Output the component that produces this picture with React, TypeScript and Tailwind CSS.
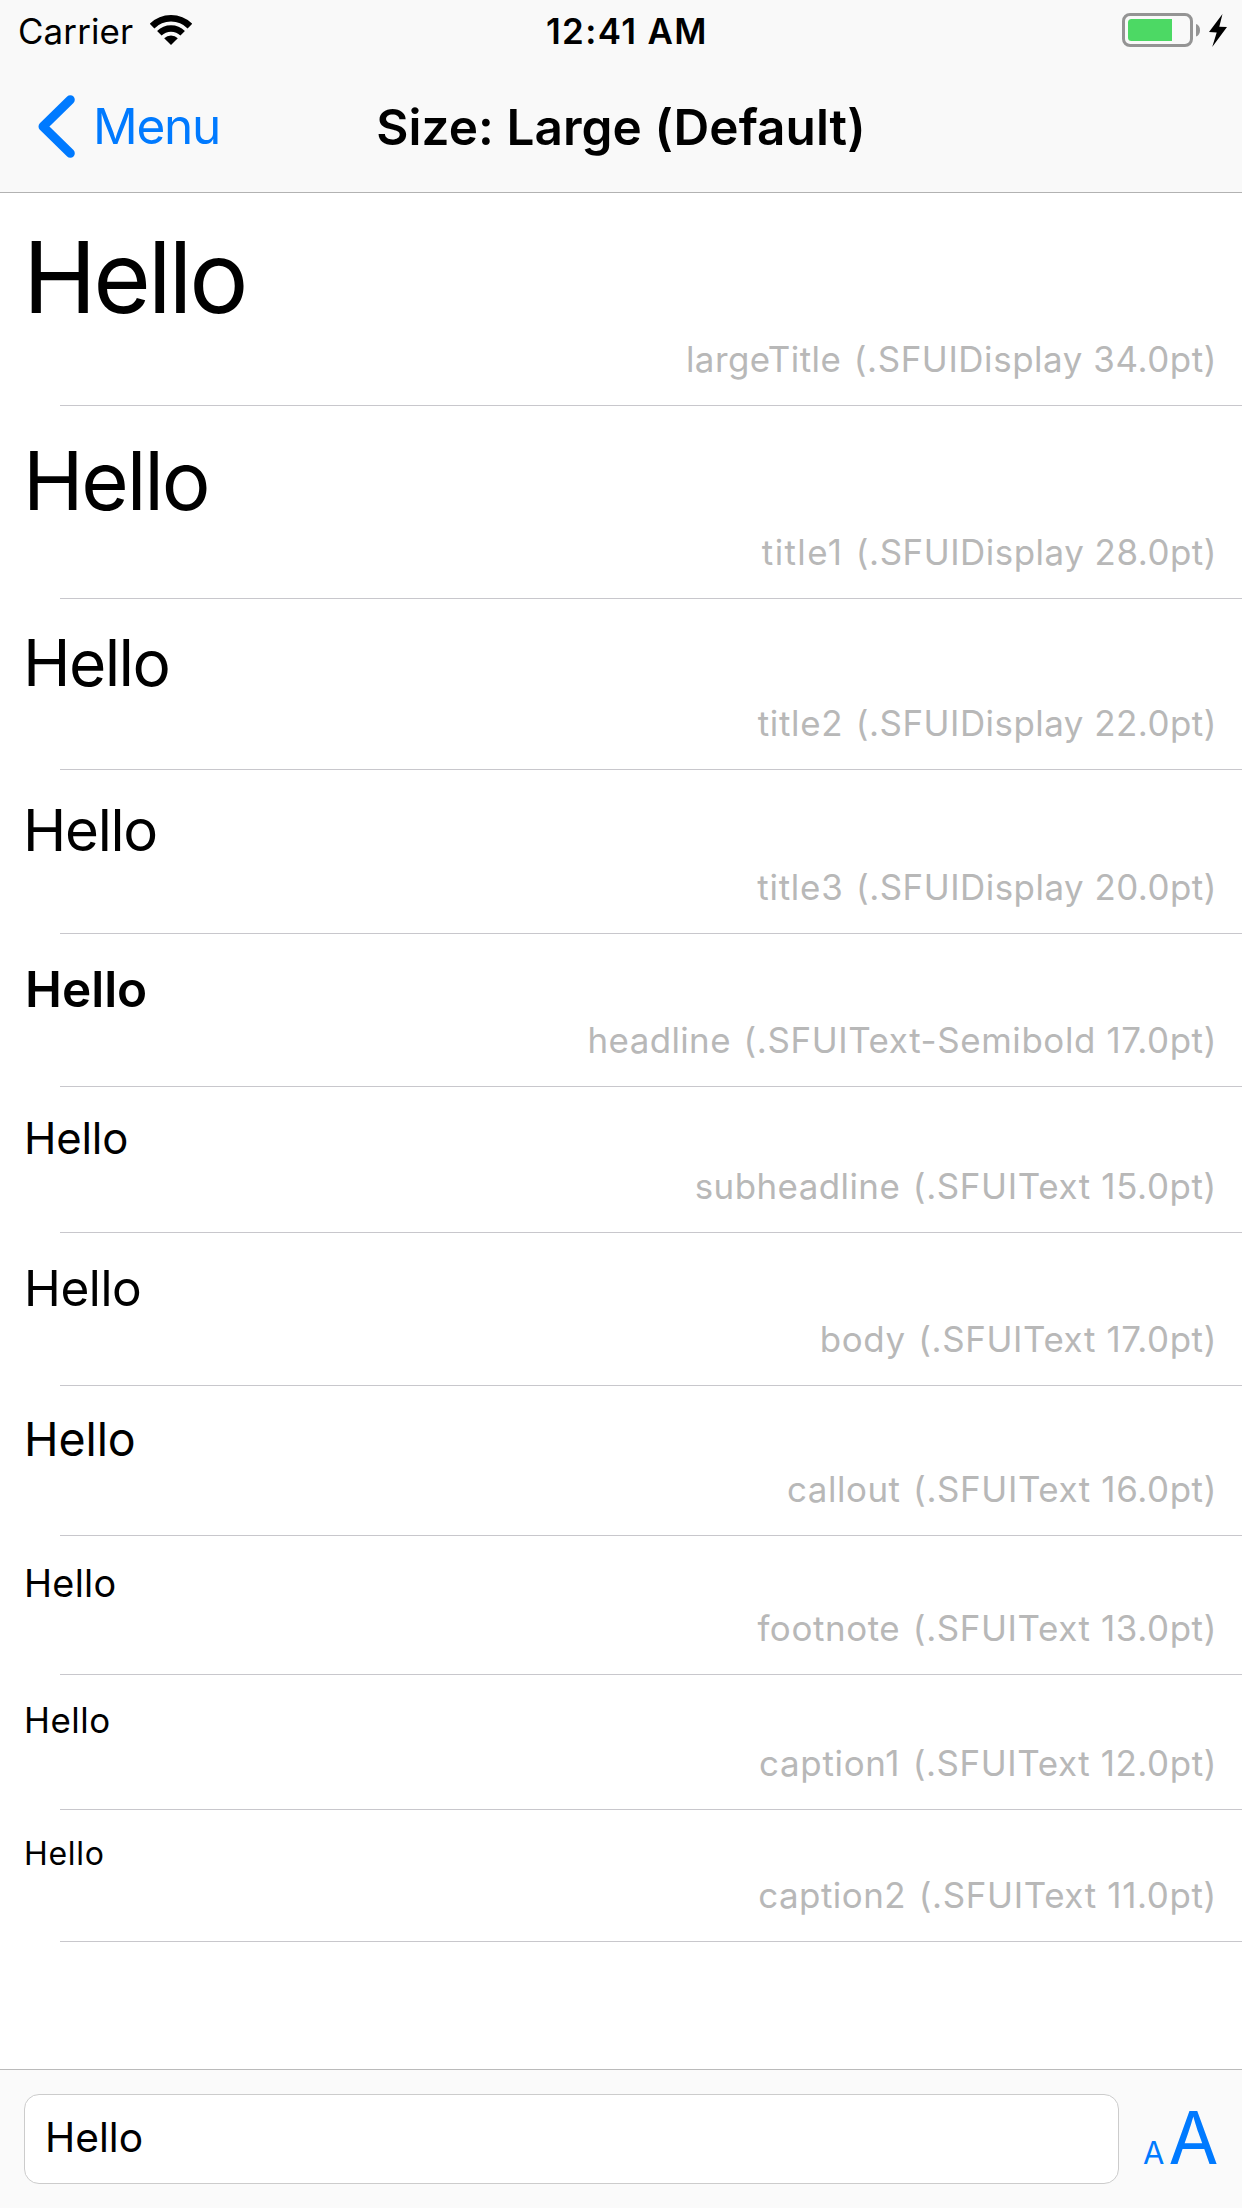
type Row = {
  name: string;
  font: string;
  height: string;
  sample: string;
  nameTracking: string;
  fontTracking: string;
};

const rows: Row[] = [
  { name: "largeTitle", font: "(.SFUIDisplay 34.0pt)", height: "h-[213px]", sample: "text-[98.9px] leading-[120px] tracking-[-3.2px] -ml-px", nameTracking: "tracking-[0.45px]", fontTracking: "tracking-[0.58px]" },
  { name: "title1", font: "(.SFUIDisplay 28.0pt)", height: "h-[193px]", sample: "text-[81.5px] leading-[101px] tracking-[-2.2px] -ml-px", nameTracking: "tracking-[1.4px]", fontTracking: "tracking-[0.52px]" },
  { name: "title2", font: "(.SFUIDisplay 22.0pt)", height: "h-[171px]", sample: "text-[64px] leading-[79px] tracking-[-1.6px] -ml-px", nameTracking: "tracking-[0.7px]", fontTracking: "tracking-[0.5px]" },
  { name: "title3", font: "(.SFUIDisplay 20.0pt)", height: "h-[164px]", sample: "text-[58.2px] leading-[72px] tracking-[-1.25px] -ml-px", nameTracking: "tracking-[0.75px]", fontTracking: "tracking-[0.5px]" },
  { name: "headline", font: "(.SFUIText-Semibold 17.0pt)", height: "h-[153px]", sample: "text-[49.5px] leading-[62px] font-semibold ml-px", nameTracking: "tracking-[0.4px]", fontTracking: "tracking-[0.62px]" },
  { name: "subheadline", font: "(.SFUIText 15.0pt)", height: "h-[146px]", sample: "text-[43.6px] leading-[55px] tracking-[-0.2px]", nameTracking: "tracking-[0.45px]", fontTracking: "tracking-[0.65px]" },
  { name: "body", font: "(.SFUIText 17.0pt)", height: "h-[153px]", sample: "text-[49.5px] leading-[62px] tracking-[-0.4px]", nameTracking: "tracking-[0.6px]", fontTracking: "tracking-[0.62px]" },
  { name: "callout", font: "(.SFUIText 16.0pt)", height: "h-[150px]", sample: "text-[46.5px] leading-[58px] tracking-[-0.1px]", nameTracking: "tracking-[0.55px]", fontTracking: "tracking-[0.62px]" },
  { name: "footnote", font: "(.SFUIText 13.0pt)", height: "h-[139px]", sample: "text-[37.8px] leading-[46px] tracking-[0.27px]", nameTracking: "tracking-[0.6px]", fontTracking: "tracking-[0.62px]" },
  { name: "caption1", font: "(.SFUIText 12.0pt)", height: "h-[135px]", sample: "text-[34.9px] leading-[42px] tracking-[0.5px]", nameTracking: "tracking-[0.7px]", fontTracking: "tracking-[0.6px]" },
  { name: "caption2", font: "(.SFUIText 11.0pt)", height: "h-[132px]", sample: "text-[32px] leading-[39px] tracking-[0.7px]", nameTracking: "tracking-[0.5px]", fontTracking: "tracking-[0.66px]" },
];

function StatusBar() {
  return (
    <div className="flex h-[60px] items-start text-[34.9px] leading-[42px]">
      <div className="flex w-[546px] pl-[18px]">
        <span className="mt-[10px] w-[132px] tracking-[0.13px]">Carrier</span>
        <svg className="mt-[15px] h-[30px] w-[42px]" viewBox="0 0 42 30" fill="none">
          <path d="M2.1 11.1A26.75 26.75 0 0 1 39.9 11.1" stroke="#000" strokeWidth="6.5" />
          <path d="M9.33 18.33A16.5 16.5 0 0 1 32.67 18.33" stroke="#000" strokeWidth="6.3" />
          <path d="M21 30L14.2 23.2A9.6 9.6 0 0 1 27.8 23.2Z" fill="#000" />
        </svg>
      </div>
      <span className="mt-[10px] font-semibold tracking-[1.37px]">12:41 AM</span>
      <svg className="mt-[13px] mr-[15px] ml-auto h-[34px] w-[105px]" viewBox="0 0 105 34" fill="none">
        <rect x="1.5" y="1.5" width="68" height="31" rx="6.5" stroke="#949494" strokeWidth="3" />
        <path d="M50 6H9.5A3.5 3.5 0 0 0 6 9.5V24.5A3.5 3.5 0 0 0 9.5 28H50Z" fill="#4cd964" />
        <path d="M74 11C76.6 11.8 78 14 78 17.2S76.6 22.7 74 23.5Z" fill="#949494" />
        <path d="M100.5 1L87 19L94.7 19.5L90.2 34L105 14L97.3 13.7Z" fill="#000" />
      </svg>
    </div>
  );
}

function NavBar() {
  return (
    <div className="grid h-[132px] grid-cols-[1fr_auto_1fr] items-center text-[49.5px] leading-[60px]">
      <div className="flex items-center pl-[38px] text-[#007aff]">
        <svg className="mt-px h-[63px] w-[37px]" viewBox="0 0 37 63" fill="none">
          <path d="M32.3 4.7L5 31.5L32.3 58.3" stroke="currentColor" strokeWidth="9" strokeLinecap="round" strokeLinejoin="round" />
        </svg>
        <span className="ml-[18px] tracking-[-1.25px]">Menu</span>
      </div>
      <h1 className="mt-[2px] font-semibold tracking-[0.05px]">Size: Large (Default)</h1>
    </div>
  );
}

function StyleRow({ name, font, height, sample, nameTracking, fontTracking }: Row) {
  return (
    <li className={`flex flex-col justify-between ${height}`}>
      <p className={`self-start pt-[24px] pl-[24px] ${sample}`}>Hello</p>
      <div className="-mt-[2px]">
        <p className="pr-[25px] pb-[25px] text-right text-[34.9px] leading-[42px] tracking-[2.7px] whitespace-nowrap text-[#b8b8b8]">
          <span className={nameTracking}>{name}</span> <span className={fontTracking}>{font}</span>
        </p>
        <div className="ml-[60px] h-px bg-[#c8c7cc]" />
      </div>
    </li>
  );
}

function Toolbar() {
  return (
    <footer className="flex h-[139px] items-start border-t border-[#bababa] bg-[#fafafa] pt-[24px] pl-[24px]">
      <div className="h-[90px] w-[1095px] rounded-[15px] border border-[#cccccc] bg-white pt-[18px] pl-[20px] text-[40.7px] leading-[49px]">
        Hello
      </div>
      <button className="ml-[24px] flex items-baseline gap-[4px] text-[#007aff]">
        <span className="text-[31px] leading-[37px]">A</span>
        <span className="text-[72.4px] leading-[87px]">A</span>
      </button>
    </footer>
  );
}

export default function App() {
  return (
    <div className="flex h-[2208px] w-[1242px] flex-col overflow-hidden bg-white font-['Inter',sans-serif] text-black">
      <header className="border-b border-[#b2b2b2] bg-[#f9f9f9]">
        <StatusBar />
        <NavBar />
      </header>
      <ul className="flex-1">
        {rows.map((row) => (
          <StyleRow key={row.name} {...row} />
        ))}
      </ul>
      <Toolbar />
    </div>
  );
}
